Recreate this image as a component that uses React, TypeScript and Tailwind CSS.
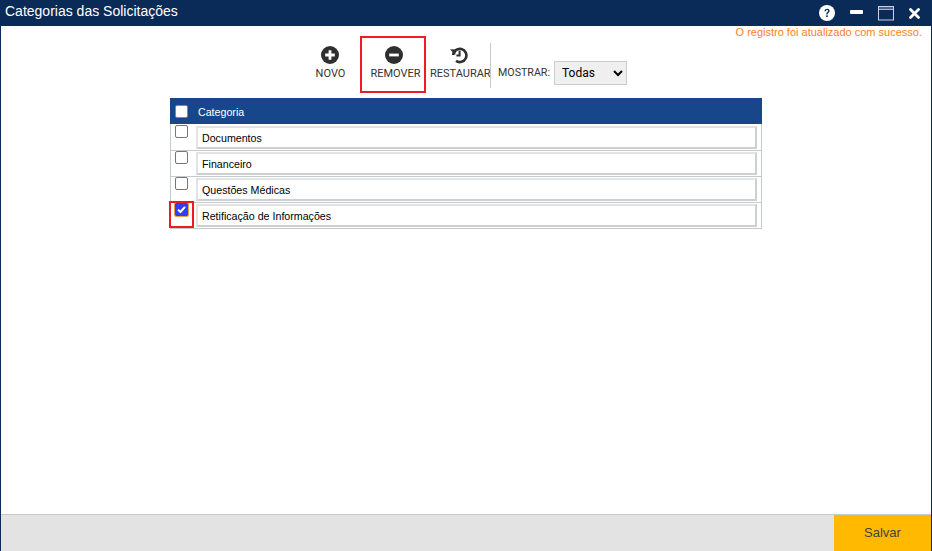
import React from "react";

const sans = "font-['Liberation_Sans',Arial,sans-serif]";
const roboto = "font-['Roboto',Arial,sans-serif]";

function Tool({ label, icon, box, w }: { label: string; icon: React.ReactNode; box?: boolean; w: string }) {
  return (
    <div className={`${w} flex flex-col items-center ${box ? "border-2 border-[#ed1c24] h-[57px] pt-[8px] pl-[2px]" : "h-[57px] pt-[10px]"}`}>
      {icon}
      <span className={`mt-[3px] text-[11px] leading-[14px] text-[#333] whitespace-nowrap ${box ? "ml-[3px]" : "ml-[1px]"} ${roboto}`}>{label}</span>
    </div>
  );
}

const rows = ["Documentos", "Financeiro", "Questões Médicas", "Retificação de Informações"];

export default function App() {
  return (
    <div className={`w-[932px] h-[551px] flex flex-col bg-white border-x border-[#0b2c5b] overflow-hidden ${sans}`}>
      <header className="h-[26px] shrink-0 -mx-px bg-[#0a2a58] flex items-start justify-between pl-[5px]">
        <h1 className="text-[14px] leading-[22px] text-white font-normal">Categorias das Solicitações</h1>
        <div className="flex items-center h-[26px] relative w-[112px]">
          <svg className="absolute left-[-1px] top-[5px]" width="16" height="16" viewBox="0 0 16 16">
            <circle cx="8" cy="8" r="8" fill="#fff" />
            <path d="M5.5 6.2c0-1.5 1.1-2.4 2.6-2.4s2.5.9 2.5 2.1c0 1.9-2.1 1.8-2.1 3.5H7.2c0-2.3 1.9-2.3 1.9-3.4 0-.5-.4-.9-1-.9-.7 0-1.1.4-1.1 1.1z" fill="#0a2a58" />
            <rect x="7.2" y="10.3" width="1.6" height="1.7" fill="#0a2a58" />
          </svg>
          <div className="absolute left-[30px] top-[10px] w-[13px] h-[4px] bg-white rounded-[1px]" />
          <svg className="absolute left-[58px] top-[5px]" width="16" height="16" viewBox="0 0 16 16" fill="none">
            <rect x="0.5" y="1.5" width="15" height="13.5" stroke="#c9d2de" strokeWidth="1" />
            <path d="M1 2h14v2.5H1z" fill="#4a6286" />
            <path d="M0.5 4.5h15" stroke="#c9d2de" strokeWidth="0.8" />
          </svg>
          <svg className="absolute left-[89px] top-[8px]" width="11" height="11" viewBox="0 0 11 11">
            <path d="M1.5 1.5l8 8M9.5 1.5l-8 8" stroke="#fff" strokeWidth="2.8" strokeLinecap="round" />
          </svg>
        </div>
      </header>

      <main className="flex-1 flex flex-col min-h-0 relative">
        <p className="absolute right-[9px] top-0 text-[11px] leading-[13px] text-[#ff7f1a] whitespace-nowrap">
          O registro foi atualizado com sucesso.
        </p>

        <div className="flex items-start h-[72px] pt-[10px] pl-[299px]">
          <Tool
            label="NOVO"
            w="w-[60px]"
            icon={
              <svg width="18" height="18" viewBox="0 0 18 18">
                <circle cx="9" cy="9" r="9" fill="#2f2f2f" />
                <path d="M9 4.2v9.6M4.2 9h9.6" stroke="#fff" strokeWidth="2.8" />
              </svg>
            }
          />
          <Tool
            label="REMOVER"
            box
            w="w-[66px]"
            icon={
              <svg width="18" height="18" viewBox="0 0 18 18">
                <circle cx="9" cy="9" r="9" fill="#2f2f2f" />
                <path d="M4.2 9h9.6" stroke="#fff" strokeWidth="2.8" />
              </svg>
            }
          />
          <div className="w-[64px] pl-[4px] flex flex-col items-start h-[57px] pt-[10px]">
            <svg className="ml-[20px]" width="18" height="18" viewBox="0 0 18 18" fill="none">
              <path d="M3.2 9A6.6 6.6 0 1 1 6 14.9" stroke="#2f2f2f" strokeWidth="2.6" />
              <path d="M0 3.2l6 .2-.8 5.6z" fill="#2f2f2f" />
              <path d="M9.6 4.8v4.8H6.4" stroke="#2f2f2f" strokeWidth="2" />
            </svg>
            <span className={`mt-[3px] text-[11px] leading-[14px] text-[#333] whitespace-nowrap ${roboto}`}>RESTAURAR</span>
          </div>
          <div className="w-px h-[45px] bg-[#c8c8c8] mt-[7px]" />
          <div className="flex items-center ml-[7px] mt-[25px] h-[24px]">
            <span className={`text-[10.67px] text-[#333] whitespace-nowrap ${roboto}`}>MOSTRAR:</span>
            <select
              defaultValue="Todas"
              className={`ml-[4px] w-[73px] h-[24px] bg-[#efefef] border border-[#ccc] text-[12px] text-black pl-[3px] ${roboto}`}
              style={{ appearance: "auto" }}
            >
              <option>Todas</option>
            </select>
          </div>
        </div>

        <div className="ml-[169px] w-[592px] border-x border-b border-[#c4cbd0]">
          <div className="-mx-px h-[26px] bg-[#17478a] flex items-center pl-[5px]">
            <span className="w-[13px] h-[13px] bg-white border border-[#888] rounded-[2px] shrink-0" />
            <span className="ml-[10px] text-[10.67px] text-white pt-[2px]">Categoria</span>
          </div>
          {rows.map((r, i) => {
            const checked = i === 3;
            return (
              <div key={r} className={`h-[26px] flex items-stretch relative ${i ? "border-t border-[#c4cbd0]" : ""}`}>
                <div className={`w-[25px] shrink-0 pl-[4px] ${i ? "" : "pt-[1px]"}`}>
                  {checked ? (
                    <>
                      <span className="flex w-[13px] h-[13px] bg-[#2f3ff5] outline outline-1 outline-[#f0a040] rounded-[1px] items-center justify-center">
                        <svg width="11" height="11" viewBox="0 0 11 11">
                          <path d="M2 5.6l2.4 2.4L9 2.8" stroke="#fff" strokeWidth="2" fill="none" />
                        </svg>
                      </span>
                      <span className="absolute left-[-2px] top-[-2px] w-[25px] h-[27px] border-[2px] border-[#ed1c24]" />
                    </>
                  ) : (
                    <span className="block w-[13px] h-[13px] bg-white border border-[#767676] rounded-[2px]" />
                  )}
                </div>
                <div className={`flex-1 mr-[4px] ${i ? "mt-[1px]" : "mt-[2px]"} mb-[1px] border-2 border-[#e3e3e3] border-r-[#cfcfcf] border-b-[#cfcfcf] flex items-center pl-[4px]`}>
                  <span className="text-[10.67px] text-black pt-[1px]">{r}</span>
                </div>
              </div>
            );
          })}
        </div>
      </main>

      <footer className="h-[37px] shrink-0 bg-[#e3e3e3] border-t border-[#c9c9c9] flex justify-end">
        <div className="w-[97px] bg-[#ffb900] flex items-center justify-center text-[13px] text-[#444]">Salvar</div>
      </footer>
    </div>
  );
}
